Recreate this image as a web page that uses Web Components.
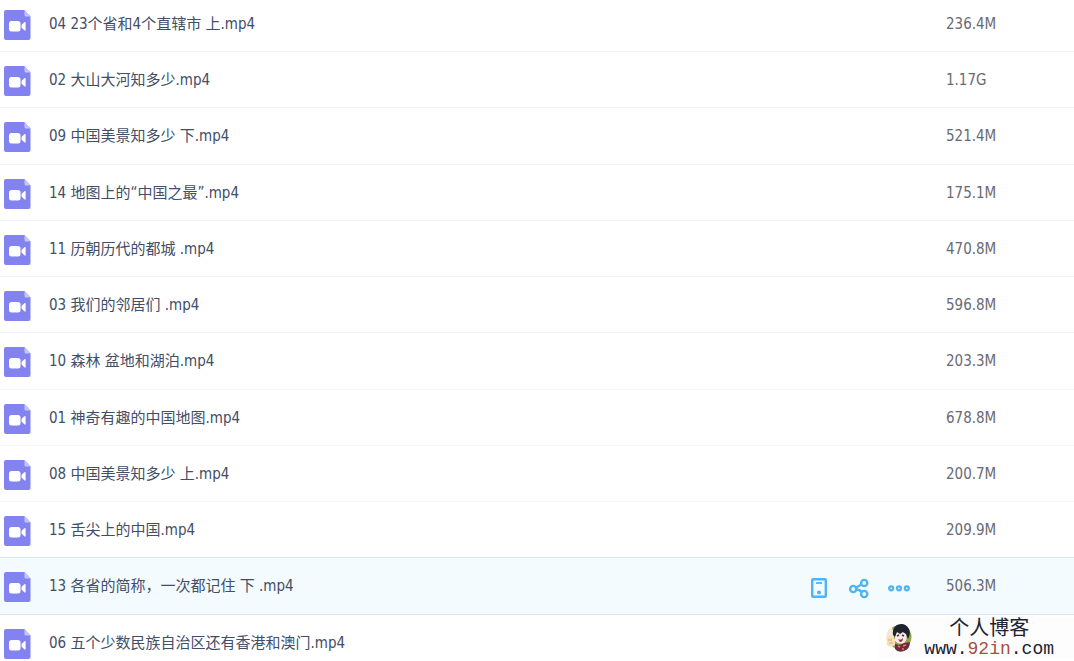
<!DOCTYPE html>
<html lang="zh-CN">
<head>
<meta charset="utf-8">
<meta name="viewport" content="width=device-width, initial-scale=1">
<title>文件列表</title>
<style>
	body {
		margin: 0;
		overflow: hidden;
		background: #fff;
		color: #424e67;
		font: 15px/20px "DejaVu Sans Condensed", "Noto Sans CJK SC", sans-serif;
	}
</style>
</head>
<body>
<file-list>
	<file-row size="236.4M">04 23个省和4个直辖市 上.mp4</file-row>
	<file-row size="1.17G">02 大山大河知多少.mp4</file-row>
	<file-row size="521.4M">09 中国美景知多少 下.mp4</file-row>
	<file-row size="175.1M">14 地图上的“中国之最”.mp4</file-row>
	<file-row size="470.8M">11 历朝历代的都城 .mp4</file-row>
	<file-row size="596.8M">03 我们的邻居们 .mp4</file-row>
	<file-row size="203.3M">10 森林 盆地和湖泊.mp4</file-row>
	<file-row size="678.8M">01 神奇有趣的中国地图.mp4</file-row>
	<file-row size="200.7M">08 中国美景知多少 上.mp4</file-row>
	<file-row size="209.9M" before-active>15 舌尖上的中国.mp4</file-row>
	<file-row size="506.3M" active>13 各省的简称，一次都记住 下 .mp4</file-row>
	<file-row>06 五个少数民族自治区还有香港和澳门.mp4</file-row>
</file-list>
<site-mark>
	<span slot="title">个人博客</span>
	www.<b>92in</b>.com
</site-mark>

<script>
class FileList extends HTMLElement {
	constructor() {
		super();
		this.attachShadow({mode: 'open'});
	}

	connectedCallback() {
		this.setAttribute('role', 'list');
		this.shadowRoot.innerHTML = `
		<style>
			:host {
				display: flex;
				flex-direction: column;
				margin-top: -4px;
			}
			::slotted(:nth-child(4n + 3)) {
				padding-bottom: 1px;
			}
		</style>
		<slot></slot>
		`;
	}
}

class VideoIcon extends HTMLElement {
	constructor() {
		super();
		this.attachShadow({mode: 'open'});
	}

	connectedCallback() {
		this.shadowRoot.innerHTML = `
		<style>
			:host {
				display: block;
				width: 27px;
				height: 30px;
			}
			svg {
				display: block;
			}
		</style>
		<svg width="27" height="30" viewBox="0 0 27 30" aria-hidden="true">
			<path d="M2 0H20.500L26.500 6.500V28Q26.500 30 24.500 30H2Q0 30 0 28V2Q0 0 2 0Z" fill="#8283f0"/>
			<path d="M20.500 0V5Q20.500 6.500 22 6.500H26.500Z" fill="#c4c5fa"/>
			<rect x="5" y="11" width="11.500" height="10.500" rx="2.500" fill="#fff"/>
			<path d="M17.500 15L20.300 12.300Q21.600 11.400 21.600 12.800V19.800Q21.600 21.200 20.300 20.300L17.500 17.600Z" fill="#fff"/>
		</svg>
		`;
	}
}

class RowActions extends HTMLElement {
	constructor() {
		super();
		this.attachShadow({mode: 'open'});
	}

	connectedCallback() {
		this.shadowRoot.innerHTML = `
		<style>
			:host {
				display: flex;
				gap: 20px;
			}
			button {
				width: 20px;
				height: 20px;
				padding: 0;
				border: 0;
				background: none;
				color: #4fb4f1;
				cursor: pointer;
			}
			svg {
				display: block;
				fill: none;
				stroke: currentColor;
				stroke-width: 2.400;
				overflow: visible;
			}
		</style>
		<button type="button" aria-label="下载到手机">
			<svg width="20" height="20" viewBox="0 0 20 20">
				<rect x="3.200" y="1.200" width="13.600" height="17.600" rx="1"/>
				<path d="M7 5H13" stroke-width="1.800"/>
				<circle cx="10" cy="14.600" r="2" fill="currentColor" stroke="none"/>
			</svg>
		</button>
		<button type="button" aria-label="分享">
			<svg width="20" height="20" viewBox="0 0 20 20">
				<circle cx="4.200" cy="11" r="3.100"/>
				<circle cx="15.200" cy="5" r="3.100"/>
				<circle cx="15.200" cy="16" r="3.100"/>
				<path d="M7 9.500L12.500 6.500M7 11.500Q11 11.500 12.600 14.200"/>
			</svg>
		</button>
		<button type="button" aria-label="更多">
			<svg width="20" height="20" viewBox="0 0 20 20">
				<g stroke-width="2.200">
					<circle cx="2.200" cy="10.300" r="2"/>
					<circle cx="10" cy="10.300" r="2"/>
					<circle cx="17.800" cy="10.300" r="2"/>
				</g>
			</svg>
		</button>
		`;
	}
}

class FileRow extends HTMLElement {
	constructor() {
		super();
		this.attachShadow({mode: 'open'});
	}

	connectedCallback() {
		const size = this.getAttribute('size') || '';
		const actions = this.hasAttribute('active') ? '<row-actions></row-actions>' : '';
		this.setAttribute('role', 'listitem');
		this.shadowRoot.innerHTML = `
		<style>
			:host {
				display: block;
				border-bottom: 1px solid #f1f5fb;
			}
			:host([before-active]) {
				border-color: #d6e8fa;
			}
			:host([active]) {
				border-color: #d6e8fa;
				background: #f3fbff;
			}
			.row {
				display: flex;
				align-items: center;
				height: 55px;
				padding-left: 4px;
			}
			video-icon {
				margin-top: 2px;
			}
			row-actions {
				margin-top: 4px;
			}
			a {
				flex: 1;
				margin-left: 18px;
				color: inherit;
				text-decoration: none;
				white-space: nowrap;
			}
			.size {
				width: 128px;
				margin-left: 37px;
				color: #696a75;
			}
		</style>
		<div class="row">
			<video-icon></video-icon>
			<a href="#"><slot></slot></a>
			${actions}
			<span class="size">${size}</span>
		</div>
		`;
	}
}

class SiteMark extends HTMLElement {
	constructor() {
		super();
		this.attachShadow({mode: 'open'});
	}

	connectedCallback() {
		this.shadowRoot.innerHTML = `
		<style>
			:host {
				position: absolute;
				right: 0;
				bottom: 2px;
				display: flex;
				align-items: center;
				gap: 12px;
				padding: 0 20px 0 8px;
				background: #fefdfd;
				color: #20222e;
			}
			.text {
				display: flex;
				flex-direction: column;
				align-items: center;
			}
			::slotted(span) {
				font: 20px/22px "Liberation Serif", "Noto Sans CJK SC", serif;
			}
			.url {
				font: 18px/20px "Liberation Mono", monospace;
			}
			::slotted(b) {
				color: #a34f42;
				font-weight: 400;
			}
		</style>
		<svg width="26" height="28" viewBox="0 0 26 28" aria-hidden="true">
			<circle cx="13.500" cy="13" r="12" fill="#91a64c"/>
			<path d="M1 9Q2 5 6 3L8 12L7 22Q1 20 0 15Z" fill="#f5e8d5"/>
			<path d="M9 9Q14 5 20 10Q22 15 18 19Q13 21 9 17Z" fill="#f8e9e8"/>
			<path d="M7 11Q6 4 11 1Q19 -2 23 5Q25 10 22 15L20 10L17 8L14 10L11 8L9 13Z" fill="#20222f"/>
			<path d="M11 12L13 11M16 11L18 12" stroke="#343447" stroke-width="1.500"/>
			<path d="M12 15Q15 17 17 14Q17 18 14 18Z" fill="#9d2f3c"/>
			<path d="M9 20Q14 22 18 19L24 18Q24 25 18 27Q12 29 9 25Z" fill="#712c3c"/>
			<path d="M12 22L14 23M17 22L20 21M16 25H18" stroke="#d6826f" stroke-width="1.500"/>
			<path d="M1 13Q5 9 6 13L9 15L9 21Q4 24 1 21Z" fill="#f6dfb9"/>
			<path d="M2 16H6M3 19H7" stroke="#dfa971"/>
		</svg>
		<div class="text">
			<slot name="title"></slot>
			<div class="url"><slot></slot></div>
		</div>
		`;
	}
}

customElements.define('video-icon', VideoIcon);
customElements.define('row-actions', RowActions);
customElements.define('file-row', FileRow);
customElements.define('file-list', FileList);
customElements.define('site-mark', SiteMark);
</script>
</body>
</html>
